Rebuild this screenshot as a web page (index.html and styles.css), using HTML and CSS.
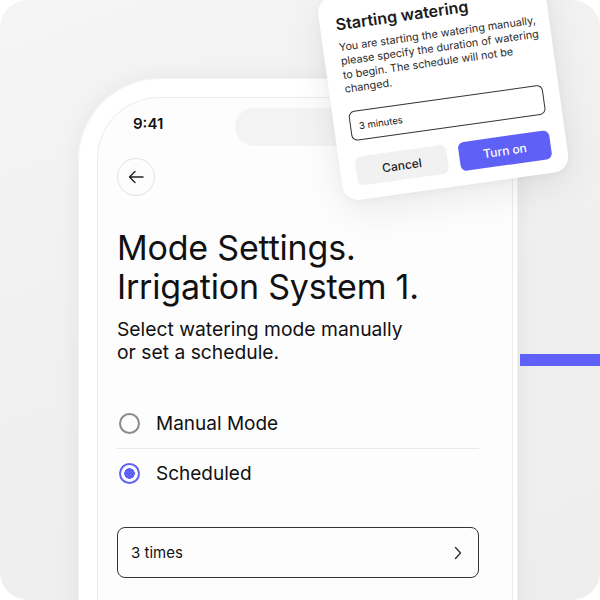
FILE: index.html
```html
<!DOCTYPE html>
<html lang="en">
<head>
<meta charset="utf-8">
<title>Mode Settings</title>
<link rel="stylesheet" href="styles.css">
</head>
<body>
<div class="canvas">
  <div class="phone">
    <div class="screen">
      <div class="status">
        <span class="time">9:41</span>
        <span class="island"></span>
      </div>
      <button class="back" aria-label="Back">
        <svg width="20" height="20" viewBox="0 0 20 20"><path d="M17 10H3.5M9 4.5L3.5 10 9 15.5" fill="none" stroke="#222" stroke-width="1.4" stroke-linecap="round" stroke-linejoin="round"/></svg>
      </button>
      <h1 class="title">Mode Settings.<br>Irrigation System 1.</h1>
      <p class="subtitle">Select watering mode manually<br>or set a schedule.</p>
      <div class="options">
        <label class="option">
          <span class="radio"></span>
          <span class="option-label">Manual Mode</span>
        </label>
        <label class="option option-checked">
          <span class="radio radio-on"></span>
          <span class="option-label">Scheduled</span>
        </label>
      </div>
      <div class="select">
        <span>3 times</span>
        <svg width="8" height="14" viewBox="0 0 8 14"><path d="M1.5 1.5L6.5 7 1.5 12.5" fill="none" stroke="#333" stroke-width="1.4" stroke-linecap="round" stroke-linejoin="round"/></svg>
      </div>
    </div>
  </div>
  <div class="stripe"></div>
  <div class="dialog">
    <h2 class="dialog-title">Starting watering</h2>
    <p class="dialog-text">You are starting the watering manually,<br>please specify the duration of watering<br>to begin. The schedule will not be<br>changed.</p>
    <div class="dialog-input">3 minutes</div>
    <div class="dialog-actions">
      <button class="btn btn-cancel">Cancel</button>
      <button class="btn btn-primary">Turn on</button>
    </div>
  </div>
</div>
</body>
</html>
```
FILE: styles.css
```css
* { box-sizing: border-box; }
html, body { margin: 0; padding: 0; background: #ffffff; }
body { font-family: "Inter", "Lato", sans-serif; color: #111; }

.canvas {
  position: relative;
  width: 600px;
  height: 600px;
  overflow: hidden;
  border-radius: 28px;
  background: linear-gradient(160deg, #f5f5f5 0%, #efefef 60%, #eeeeee 100%);
  padding: 78px 0 0 78px;
}

.phone {
  width: 440px;
  height: 640px;
  background: #ffffff;
  border-radius: 82px 82px 0 0;
  padding: 19px 5px 0 19px;
  box-shadow: 0 0 24px rgba(0, 0, 0, 0.06), inset 0 0 0 1px #f2f2f2;
}

.screen {
  height: 100%;
  background: #fdfdfd;
  border-radius: 62px 62px 0 0;
  box-shadow: inset 0 0 0 1px #ececec;
  padding: 11px 34px 0 20px;
}

.status {
  display: flex;
  align-items: flex-start;
  height: 38px;
}
.time {
  margin-left: 16px;
  padding-top: 6px;
  font-size: 15px;
  font-weight: 600;
  width: 102px;
  color: #111;
}
.island {
  width: 150px;
  height: 38px;
  border-radius: 19px;
  background: #f3f3f3;
}

.back {
  display: flex;
  align-items: center;
  justify-content: center;
  margin-top: 12px;
  width: 38px;
  height: 38px;
  padding: 0;
  border-radius: 50%;
  border: 1px solid #e2e2e2;
  background: #fdfdfd;
}

.title {
  margin: 32px 0 0;
  font-size: 34px;
  font-weight: 400;
  line-height: 39px;
  letter-spacing: -0.2px;
  color: #111;
}

.subtitle {
  margin: 12px 0 0;
  font-size: 19.3px;
  line-height: 23px;
  color: #111;
}

.options { margin-top: 34px; }
.option {
  display: flex;
  align-items: center;
  height: 50px;
}
.option + .option { border-top: 1.5px solid #e8e8e8; }
.radio {
  width: 21px;
  height: 21px;
  border-radius: 50%;
  border: 2px solid #8a8a8a;
  margin-left: 2px;
  margin-right: 16px;
  flex: none;
}
.radio-on {
  border: 2.5px solid #5f60f5;
  background: radial-gradient(circle, #5f60f5 0 5px, transparent 5.5px);
}
.option-label {
  font-size: 19px;
  color: #111;
}

.select {
  margin-top: 29px;
  height: 51px;
  border: 1.5px solid #333;
  border-radius: 8px;
  display: flex;
  align-items: center;
  justify-content: space-between;
  padding: 0 16px 0 13px;
  font-size: 15px;
  color: #111;
}

.stripe {
  position: absolute;
  left: 520px;
  top: 354px;
  width: 80px;
  height: 12px;
  background: #5f60f5;
}

.dialog {
  position: absolute;
  left: 316px;
  top: -1px;
  width: 228px;
  padding: 16.5px 16px 14px;
  background: #ffffff;
  border-radius: 16px;
  transform-origin: 0 0;
  transform: rotate(-8deg);
  box-shadow: 0 12px 40px rgba(0, 0, 0, 0.08), 0 2px 8px rgba(0, 0, 0, 0.04);
}
.dialog-title {
  margin: 0;
  font-size: 16px;
  line-height: 22px;
  font-weight: 600;
  color: #1a1a1a;
}
.dialog-text {
  margin: 6px 0 0;
  font-size: 10.8px;
  line-height: 14px;
  white-space: nowrap;
  color: #2a2a2a;
}
.dialog-input {
  margin-top: 15.5px;
  height: 30px;
  border: 1px solid #333;
  border-radius: 6px;
  display: flex;
  align-items: center;
  padding-left: 8px;
  font-size: 9.5px;
  color: #111;
}
.dialog-actions {
  margin-top: 16px;
  display: flex;
  gap: 12px;
}
.btn {
  flex: 1;
  height: 29px;
  border: none;
  border-radius: 6px;
  font-family: inherit;
  font-size: 12px;
  font-weight: 500;
}
.btn-cancel { background: #f1f1f1; color: #222; }
.btn-primary { background: #5f60f5; color: #ffffff; }
```
